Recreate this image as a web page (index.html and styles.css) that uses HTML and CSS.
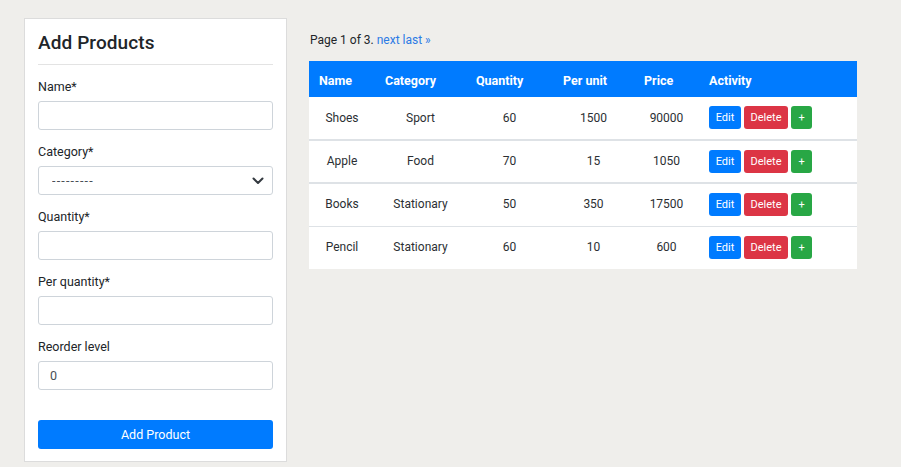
FILE: index.html
```html
<!DOCTYPE html>
<html>
<head>
<meta charset="utf-8">
<link rel="stylesheet" href="styles.css">
</head>
<body>
<div class="page">
  <div class="card">
    <h2 class="title">Add Products</h2>
    <div class="divider"></div>
    <label class="label">Name*</label>
    <input class="input" type="text">
    <label class="label">Category*</label>
    <div class="select-wrap">
      <select class="input select"><option>---------</option></select>
      <svg class="chev" width="12" height="8" viewBox="0 0 12 8"><path d="M1.5 1.5 L6 6 L10.5 1.5" fill="none" stroke="#343a40" stroke-width="2" stroke-linecap="round" stroke-linejoin="round"/></svg>
    </div>
    <label class="label">Quantity*</label>
    <input class="input" type="text">
    <label class="label">Per quantity*</label>
    <input class="input" type="text">
    <label class="label">Reorder level</label>
    <input class="input" type="text" value="0">
    <button class="submit">Add Product</button>
  </div>
  <div class="main">
    <div class="pager">Page 1 of 3. <a class="link">next</a> <a class="link">last &raquo;</a></div>
    <table class="table">
      <colgroup>
        <col style="width:66px"><col style="width:91px"><col style="width:87px"><col style="width:81px"><col style="width:65px"><col style="width:158px">
      </colgroup>
      <thead>
        <tr><th>Name</th><th>Category</th><th>Quantity</th><th>Per unit</th><th>Price</th><th>Activity</th></tr>
      </thead>
      <tbody>
        <tr><td>Shoes</td><td>Sport</td><td>60</td><td>1500</td><td>90000</td><td class="act"><span class="btn edit">Edit</span><span class="btn del">Delete</span><span class="btn plus">+</span></td></tr>
      </tbody>
      <tbody>
        <tr><td>Apple</td><td>Food</td><td>70</td><td>15</td><td>1050</td><td class="act"><span class="btn edit">Edit</span><span class="btn del">Delete</span><span class="btn plus">+</span></td></tr>
      </tbody>
      <tbody>
        <tr><td>Books</td><td>Stationary</td><td>50</td><td>350</td><td>17500</td><td class="act"><span class="btn edit">Edit</span><span class="btn del">Delete</span><span class="btn plus">+</span></td></tr>
        <tr class="thin"><td>Pencil</td><td>Stationary</td><td>60</td><td>10</td><td>600</td><td class="act"><span class="btn edit">Edit</span><span class="btn del">Delete</span><span class="btn plus">+</span></td></tr>
      </tbody>
    </table>
  </div>
</div>
</body>
</html>
```
FILE: styles.css
```css
* { box-sizing: border-box; }
html, body { margin: 0; padding: 0; }
body {
  background: #efeeeb;
  font-family: Roboto, "Noto Sans", sans-serif;
  font-size: 12.5px;
  color: #212529;
  width: 901px;
  height: 467px;
  overflow: hidden;
}
.page {
  display: flex;
  align-items: flex-start;
  padding: 18px 0 0 24px;
  gap: 22px;
}
.card {
  width: 263px;
  background: #fff;
  border: 1px solid #dcdcdc;
  padding: 12px 13px 12px 13px;
  display: flex;
  flex-direction: column;
}
.title {
  margin: 0;
  font-size: 19px;
  font-weight: 500;
  line-height: 24px;
  color: #212529;
  letter-spacing: 0.1px;
}
.divider {
  height: 1px;
  background: #e3e3e3;
  margin: 9px 0 12px 0;
}
.label {
  display: block;
  line-height: 20px;
  height: 20px;
  margin-bottom: 4px;
  color: #212529;
}
.input {
  display: block;
  width: 100%;
  height: 29px;
  border: 1px solid #ced4da;
  border-radius: 3px;
  background: #fff;
  padding: 0 11px;
  font-family: inherit;
  font-size: 12.5px;
  color: #495057;
  margin: 0 0 12px 0;
  outline: none;
}
.select-wrap { position: relative; }
.select { appearance: none; -webkit-appearance: none; padding-left: 13px; letter-spacing: 1.2px; }
.chev { position: absolute; right: 9px; top: 11px; }
.submit {
  margin-top: 18px;
  height: 29px;
  width: 100%;
  border: 0;
  border-radius: 3px;
  background: #007bff;
  color: #fff;
  font-family: inherit;
  font-size: 12.5px;
}
.main { display: flex; flex-direction: column; }
.pager {
  margin-top: 13px;
  height: 18px;
  line-height: 18px;
  padding-left: 1px;
  margin-bottom: 12px;
  font-size: 12px;
}
.link { color: #2c7be5; text-decoration: none; }
.table {
  border-collapse: collapse;
  table-layout: fixed;
  width: 548px;
  background: #fff;
  font-size: 12px;
}
.table th {
  background: #007bff;
  color: #fff;
  font-weight: 700;
  text-align: left;
  height: 36px;
  padding: 2px 10px 0 10px;
  font-size: 12.5px;
}
.table td {
  height: 43px;
  text-align: center;
  padding: 0 4px 1px 4px;
  vertical-align: middle;
  color: #2b2f33;
}
.table tbody + tbody { border-top: 2px solid #dee2e6; }
.table tr.thin td { border-top: 1px solid #dee2e6; }
.table td.act { text-align: left; padding-left: 10px; }
.btn {
  display: inline-block;
  height: 23px;
  line-height: 23px;
  border-radius: 3px;
  color: #fff;
  font-size: 11px;
  margin-right: 3px;
  vertical-align: middle;
  padding: 0;
  text-align: center;
}
.edit { background: #007bff; width: 32px; }
.del { background: #dc3545; width: 44px; }
.plus { background: #28a745; width: 21px; }
```
